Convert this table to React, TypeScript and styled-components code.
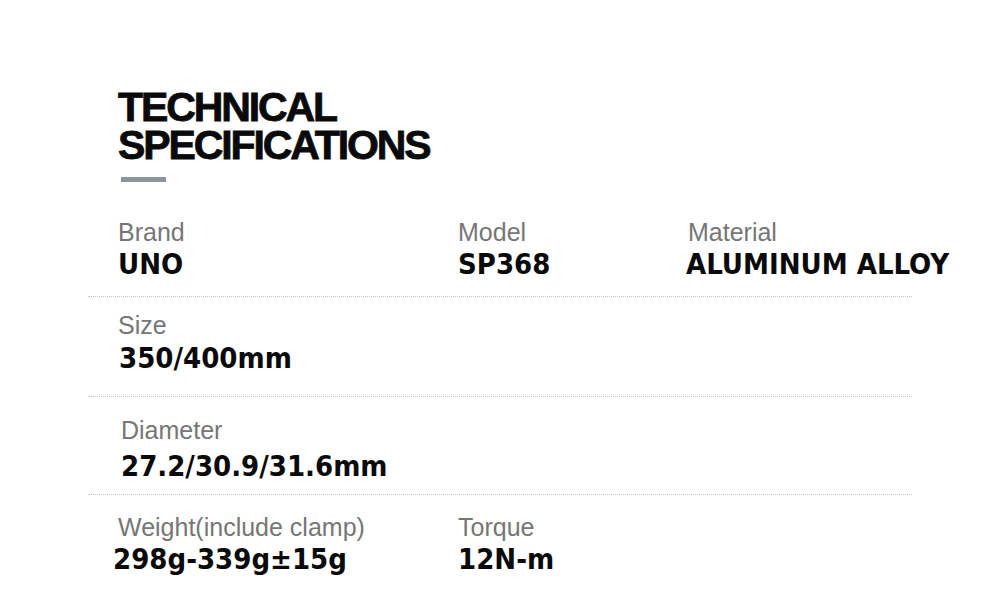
import styled, { createGlobalStyle } from 'styled-components'

const GlobalStyle = createGlobalStyle`
	html, body {
		margin: 0;
		padding: 0;
		background: #ffffff;
	}
`

const Page = styled.div`
	width: 1000px;
	height: 612px;
	overflow: hidden;
	background: #fff;
	padding: 88px 0 0 88px;
	box-sizing: border-box;
`

const Title = styled.h1`
	margin: 0 0 0 30px;
	font-family: 'Liberation Sans', Arial, sans-serif;
	font-weight: 700;
	font-size: 41px;
	line-height: 38px;
	letter-spacing: -2.1px;
	-webkit-text-stroke: 0.8px #0a0a0a;
	color: #0a0a0a;
`

const TitleBar = styled.div`
	width: 45px;
	height: 5px;
	margin: 13px 0 0 33px;
	background: #8c949c;
`

const Table = styled.div`
	width: 824px;
	margin-top: 36px;
`

const Row = styled.div<{ $pt: number; $h: number; $last?: boolean }>`
	display: grid;
	grid-template-columns: 340px 230px 1fr;
	padding: ${(p) => p.$pt}px 0 0 30px;
	height: ${(p) => p.$h}px;
	box-sizing: border-box;
	border-bottom: ${(p) => (p.$last ? 'none' : '1px dotted #c4c4c4')};
`

const Field = styled.div<{ $gap: number }>`
	display: flex;
	flex-direction: column;
	gap: ${(p) => p.$gap}px;
`

const Label = styled.div<{ $shift?: number }>`
	font-family: 'Liberation Sans', Arial, sans-serif;
	font-size: 25px;
	line-height: 28px;
	color: #767676;
	margin-left: ${(p) => p.$shift || 0}px;
	white-space: nowrap;
`

const Value = styled.div<{ $shift?: number }>`
	font-family: 'DejaVu Sans Condensed', 'DejaVu Sans', sans-serif;
	font-stretch: condensed;
	font-weight: 700;
	font-size: 29px;
	line-height: 34px;
	color: #0a0a0a;
	margin-left: ${(p) => p.$shift || 0}px;
	white-space: nowrap;
`

export default function App() {
	return (
		<>
			<GlobalStyle />
			<Page>
				<Title>
					TECHNICAL
					<br />
					SPECIFICATIONS
				</Title>
				<TitleBar />
				<Table>
					<Row $pt={0} $h={79}>
						<Field $gap={1}>
							<Label>Brand</Label>
							<Value>UNO</Value>
						</Field>
						<Field $gap={1}>
							<Label>Model</Label>
							<Value>SP368</Value>
						</Field>
						<Field $gap={1}>
							<Label>Material</Label>
							<Value $shift={-2}>ALUMINUM ALLOY</Value>
						</Field>
					</Row>
					<Row $pt={14} $h={100}>
						<Field $gap={2}>
							<Label>Size</Label>
							<Value $shift={1}>350/400mm</Value>
						</Field>
					</Row>
					<Row $pt={19} $h={98}>
						<Field $gap={5}>
							<Label $shift={3}>Diameter</Label>
							<Value $shift={3}>27.2/30.9/31.6mm</Value>
						</Field>
					</Row>
					<Row $pt={18} $h={100} $last>
						<Field $gap={1}>
							<Label>Weight(include clamp)</Label>
							<Value $shift={-5}>298g-339g±15g</Value>
						</Field>
						<Field $gap={1}>
							<Label>Torque</Label>
							<Value>12N-m</Value>
						</Field>
					</Row>
				</Table>
			</Page>
		</>
	)
}
